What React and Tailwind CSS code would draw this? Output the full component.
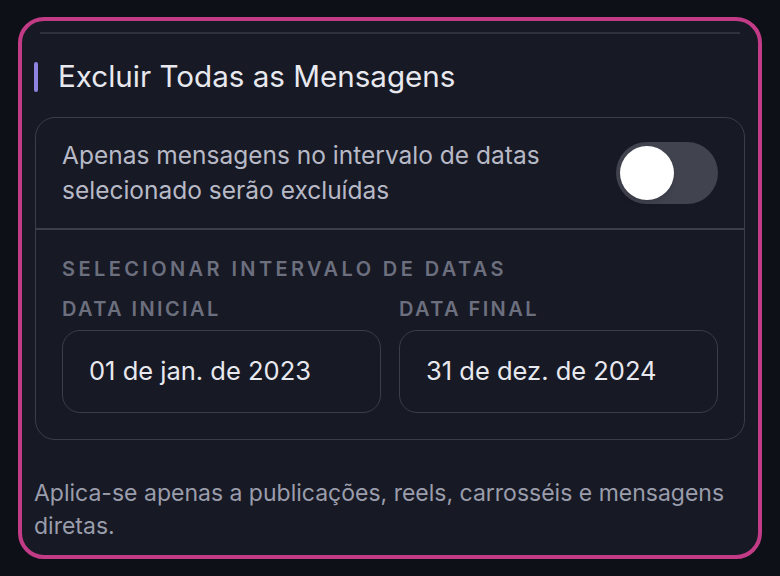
export default function App() {
  return (
    <div
      className="w-[780px] h-[576px] bg-[#0e1018] pt-[17px] pl-[18px]"
      style={{ fontFamily: 'Inter, "Noto Sans", sans-serif' }}
    >
      <div className="w-[744px] h-[542px] border-4 border-[#c13b86] rounded-[26px] bg-[#171925] px-3 pt-[11px]">
        <div className="mx-[6px] h-[2px] bg-[#2f313d]" />

        <div className="flex items-center gap-5 mt-[28px] h-[30px]">
          <div className="w-1 h-[30px] rounded-full bg-[#8f83e0]" />
          <h2 className="text-[29.6px] leading-none text-[#e8e9ef] font-normal">Excluir Todas as Mensagens</h2>
        </div>

        <div className="mt-[25px] mx-px border-[1.5px] border-[#3a3d4a] rounded-[20px]">
          <div className="flex items-center justify-between px-[26px] h-[110px]">
            <p className="text-[24.5px] leading-[35px] text-[#b7bac6]">
              Apenas mensagens no intervalo de datas
              <br />
              selecionado serão excluídas
            </p>
            <button className="w-[102px] h-[62px] rounded-full bg-[#41434f] p-1 flex items-center">
              <span className="block w-[54px] h-[54px] rounded-full bg-white shadow-md" />
            </button>
          </div>

          <div className="h-[1.5px] bg-[#3a3d4a]" />

          <div className="px-[26px] pt-[29px] pb-[26px]">
            <div className="text-[20px] leading-none font-semibold tracking-[0.17em] text-[#6c6f7e]">
              SELECIONAR INTERVALO DE DATAS
            </div>
            <div className="grid grid-cols-2 gap-[18px] mt-[20px]">
              <div>
                <div className="text-[20px] leading-none font-semibold tracking-[0.12em] text-[#6c6f7e]">DATA INICIAL</div>
                <div className="mt-[11px] h-[83px] border-[1.5px] border-[#3a3d4a] rounded-[18px] flex items-center px-[26px] text-[25.5px] text-[#e8e9ef]">
                  01 de jan. de 2023
                </div>
              </div>
              <div>
                <div className="text-[20px] leading-none font-semibold tracking-[0.12em] text-[#6c6f7e]">DATA FINAL</div>
                <div className="mt-[11px] h-[83px] border-[1.5px] border-[#3a3d4a] rounded-[18px] flex items-center px-[26px] text-[25.5px] text-[#e8e9ef]">
                  31 de dez. de 2024
                </div>
              </div>
            </div>
          </div>
        </div>

        <p className="mt-[37px] text-[23px] leading-[33px] text-[#9a9dab]">
          Aplica-se apenas a publicações, reels, carrosséis e mensagens diretas.
        </p>
      </div>
    </div>
  )
}
